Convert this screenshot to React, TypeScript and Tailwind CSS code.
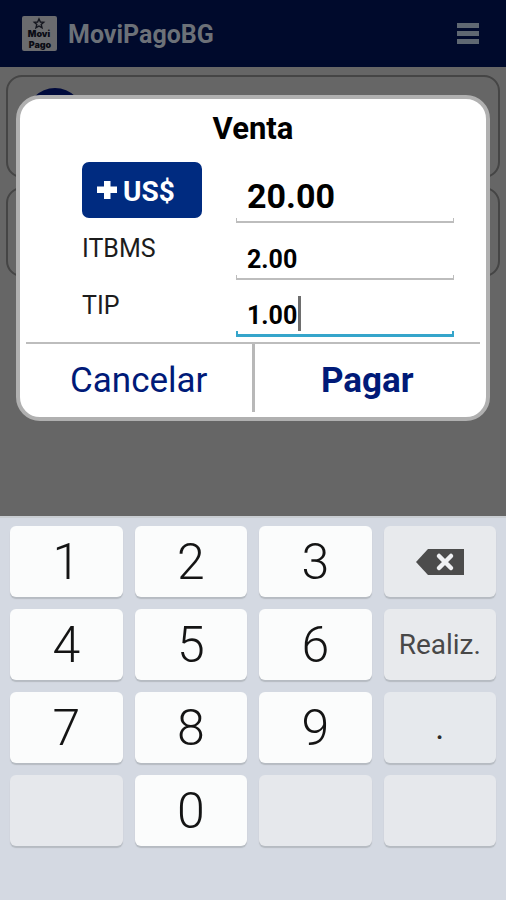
import React from "react";

type FieldProps = {
  id: string;
  label: string;
  value: string;
  focused?: boolean;
};

function Logo() {
  return (
    <svg viewBox="0 0 35 35" className="size-[35px] shrink-0" role="img" aria-label="Movi Pago">
      <rect width="35" height="35" rx="2" fill="#6a6b6e" />
      <path
        d="M17 3l1.400 3 3.300.3-2.500 2.200.8 3.300-3-1.800-3 1.800.8-3.300-2.500-2.200 3.300-.3z"
        fill="none"
        stroke="#15171f"
        strokeWidth="1.4"
      />
      <text x="17" y="21" textAnchor="middle" fontSize="9" fontWeight="900" fill="#0a0c14" fontFamily="Inter, sans-serif">
        Movi
      </text>
      <text x="18" y="32" textAnchor="middle" fontSize="9" fontWeight="900" fill="#0a0c14" fontFamily="Inter, sans-serif">
        Pago
      </text>
    </svg>
  );
}

function Header() {
  return (
    <header className="flex h-[67px] items-center bg-[#000a2c] pr-[27px] pl-[22px]">
      <Logo />
      <h1 className="ml-[11px] flex-1 pt-[2px] text-[25px] font-bold text-[#6c7178]">MoviPagoBG</h1>
      <button type="button" aria-label="Menú" className="flex w-[22px] flex-col gap-[3px]">
        <span className="h-[5px] bg-[#5f6872]" />
        <span className="h-[5px] bg-[#5f6872]" />
        <span className="h-[5px] bg-[#5f6872]" />
      </button>
    </header>
  );
}

function AmountField({ id, label, value, focused }: FieldProps) {
  return (
    <div className="flex h-[57px]">
      <label htmlFor={id} className="w-[154px] shrink-0 text-[25px] leading-[52px] text-[#1c1c1c]">
        {label}
      </label>
      <div className="relative flex min-w-0 flex-1 flex-col justify-end">
        <input
          id={id}
          defaultValue={value}
          inputMode="decimal"
          className="h-[34px] w-full bg-transparent pt-[3px] pl-[11px] text-[25px] font-bold text-black outline-none"
        />
        {focused && <span className="absolute bottom-[6px] left-[62px] h-[35px] w-[3px] bg-[#6e6e6e]" />}
        {focused ? (
          <div className="h-[6px] border-x-2 border-b-3 border-[#35a5cb]" />
        ) : (
          <div className="h-[5px] border-x border-b-2 border-[#bdbdbd]" />
        )}
      </div>
    </div>
  );
}

function SaleDialog() {
  return (
    <form
      role="dialog"
      aria-labelledby="sale-title"
      onSubmit={(e) => e.preventDefault()}
      className="rounded-[24px] border-4 border-[#b0b0b0] bg-white px-[6px] pb-[5px]"
    >
      <h2 id="sale-title" className="mb-[3px] text-center text-[31px] leading-[60px] font-bold text-black">
        Venta
      </h2>
      <div className="pr-[26px] pl-[56px]">
        <div className="flex h-[61px]">
          <div className="w-[154px] shrink-0">
            <button
              type="button"
              className="flex h-[56px] w-[120px] items-center rounded-[7px] bg-[#002b80] pl-[15px] text-[28px] font-bold text-white"
            >
              <svg viewBox="0 0 20 20" className="mr-[6px] size-[20px]" aria-hidden="true">
                <path d="M7 1h6.500v5.500H20v6.500h-6.500V19H7v-6H0V6.500h7z" fill="#fff" />
              </svg>
              <span className="pt-1">US$</span>
            </button>
          </div>
          <div className="flex min-w-0 flex-1 flex-col justify-end">
            <input
              aria-label="Monto en US$"
              defaultValue="20.00"
              inputMode="decimal"
              className="h-[44px] w-full bg-transparent pl-[11px] text-[34px] font-bold text-black outline-none"
            />
            <div className="h-[5px] border-x border-b-2 border-[#bdbdbd]" />
          </div>
        </div>
        <AmountField id="itbms" label="ITBMS" value="2.00" />
        <AmountField id="tip" label="TIP" value="1.00" focused />
      </div>
      <div className="mt-[5px] flex h-[70px] border-t-2 border-[#bdbdbd] text-[35px] text-[#001a78]">
        <button type="button" className="flex-1 pt-[6px]">
          Cancelar
        </button>
        <span className="w-[3px] bg-[#b8b8b8]" />
        <button type="submit" className="flex-1 pt-[6px] font-bold">
          Pagar
        </button>
      </div>
    </form>
  );
}

function BackspaceIcon() {
  return (
    <svg viewBox="0 0 48 26" className="h-[26px] w-[48px]" aria-hidden="true">
      <path d="M0 13L12 0H48V26H12z" fill="#4c4c4c" />
      <path d="M23 7l12 12M35 7L23 19" stroke="#f0f1f3" strokeWidth="4.500" strokeLinecap="round" />
    </svg>
  );
}

type KeyDef = { name: string; kind: "digit" | "action" | "dot" | "delete" | "blank" };

const keys: KeyDef[] = [
  { name: "1", kind: "digit" },
  { name: "2", kind: "digit" },
  { name: "3", kind: "digit" },
  { name: "Borrar", kind: "delete" },
  { name: "4", kind: "digit" },
  { name: "5", kind: "digit" },
  { name: "6", kind: "digit" },
  { name: "Realiz.", kind: "action" },
  { name: "7", kind: "digit" },
  { name: "8", kind: "digit" },
  { name: "9", kind: "digit" },
  { name: ".", kind: "dot" },
  { name: "", kind: "blank" },
  { name: "0", kind: "digit" },
  { name: "", kind: "blank" },
  { name: "", kind: "blank" },
];

const keyStyles: Record<KeyDef["kind"], string> = {
  digit: "bg-[#fbfcfc] pt-[2px] text-[50px] font-light text-[#141414]",
  action: "bg-[#e8eaed] text-[28px] text-[#484848]",
  dot: "bg-[#e6e9ed] text-[34px] text-[#2a2a2a]",
  delete: "bg-[#e8eaed]",
  blank: "bg-[#e6e8ec]",
};

function Keypad() {
  return (
    <div className="grid grid-cols-4 gap-3 border-t-2 border-[#c9cdd2] bg-[#d4d9e2] px-[10px] pt-2 pb-[54px]">
      {keys.map((key, i) => (
        <button
          key={i}
          type="button"
          disabled={key.kind === "blank"}
          aria-label={key.name || "Tecla vacía"}
          className={`flex h-[71px] items-center justify-center rounded-[6px] shadow-[0_2px_1px_#b6bbc2] ${keyStyles[key.kind]}`}
        >
          {key.kind === "delete" ? <BackspaceIcon /> : key.name}
        </button>
      ))}
    </div>
  );
}

export default function App() {
  return (
    <div className="flex min-h-screen flex-col font-[Roboto,sans-serif]">
      <main className="relative flex-1 bg-[#666666]">
        <Header />
        <div className="flex flex-col gap-[9px] px-[6px] pt-2">
          <section className="h-[103px] rounded-[16px] border-2 border-[#454545] pt-[11px] pl-[18px]">
            <div className="size-[58px] rounded-full bg-[#000a3c]" />
          </section>
          <section className="h-[90px] rounded-[16px] border-2 border-[#454545]" />
        </div>
        <div className="absolute inset-x-0 top-[95px] px-4">
          <SaleDialog />
        </div>
      </main>
      <Keypad />
    </div>
  );
}
